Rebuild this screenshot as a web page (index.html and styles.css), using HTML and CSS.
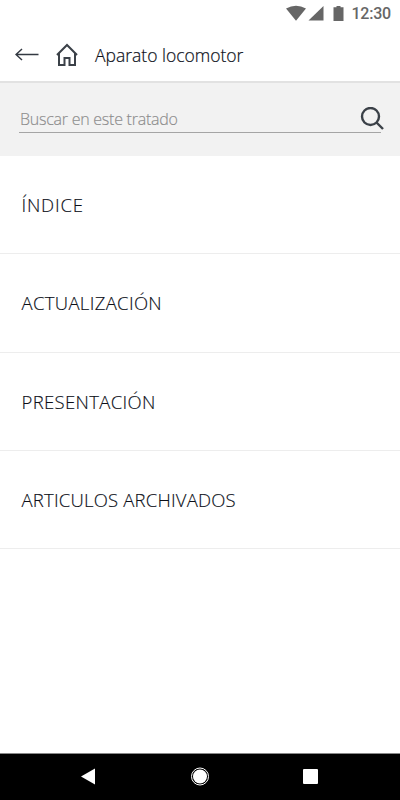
FILE: index.html
```html
<!DOCTYPE html>
<html lang="es">

<head>
    <meta charset="UTF-8">
    <meta name="viewport" content="width=device-width, initial-scale=1.0">
    <title>Aparato locomotor</title>
    <link rel="stylesheet" href="styles.css">
</head>

<body>
    <div class="status">
        <svg class="status-icons" width="60" height="18" viewBox="0 0 60 18">
            <path d="M1 4.500Q11 -1 21 4.500L11 16.800Z" />
            <path d="M23.500 16.500L38.500 2V16.500Z" />
            <path d="M48.500 3.200h3V2h4v1.200h3V17h-10Z" />
        </svg>
        <span class="clock">12:30</span>
    </div>
    <header class="topbar">
        <svg class="back" width="24" height="14" viewBox="0 0 24 14">
            <path d="M23.500 6.500H1M7 1L1 6.500l6 5.500" />
        </svg>
        <svg class="home" width="22" height="24" viewBox="0 0 22 24">
            <path d="M1 12L11 2l10 10M3 10.500V22h5.500v-7h5v7H19V10.500" />
        </svg>
        <h1 class="title">Aparato locomotor</h1>
    </header>
    <div class="search">
        <div class="field">
            <input class="input" type="text" placeholder="Buscar en este tratado">
        </div>
        <svg class="lens" width="24" height="24" viewBox="0 0 24 24">
            <circle cx="10.500" cy="9.500" r="8.500" />
            <path d="M16.500 15.500l6.500 6.500" />
        </svg>
    </div>
    <ul class="menu">
        <li class="item indice">ÍNDICE</li>
        <li class="item">ACTUALIZACIÓN</li>
        <li class="item">PRESENTACIÓN</li>
        <li class="item archivo">ARTICULOS ARCHIVADOS</li>
    </ul>
    <nav class="navbar">
        <svg width="400" height="46" viewBox="0 0 400 46">
            <path d="M81 22.500L95 14.500v16Z" />
            <circle cx="200" cy="22.500" r="8.500" class="ring" />
            <circle cx="200" cy="22.500" r="7" />
            <rect x="303" y="15" width="15" height="15" rx="1" />
        </svg>
    </nav>
</body>

</html>
```
FILE: styles.css
```css
* {
    box-sizing: border-box;
}

body {
    margin: 0;
    height: 800px;
    display: flex;
    flex-direction: column;
    background: #fff;
    color: #0c0f18;
    font-family: "Open Sans", "Noto Sans", sans-serif;
    overflow: hidden;
}

.status {
    height: 28px;
    display: flex;
    justify-content: flex-end;
    padding: 4px 9px 0 0;
    color: #666;
}

.status-icons {
    fill: #666;
    margin-right: 6px;
}

.clock {
    font-family: Roboto, sans-serif;
    font-size: 16px;
    font-weight: 500;
    line-height: 19px;
    letter-spacing: -0.2px;
}

.topbar {
    height: 55px;
    display: flex;
    align-items: center;
    padding-left: 15px;
    border-bottom: 2px solid #e2e2e2;
}

.back {
    fill: none;
    stroke: #333942;
    stroke-width: 1.5;
}

.home {
    fill: none;
    stroke: #3b4148;
    stroke-width: 2;
    margin-left: 17px;
}

.title {
    margin: 1px 0 0 17px;
    font-size: 17.5px;
    font-weight: 300;
    white-space: nowrap;
    -webkit-text-stroke: 0.2px;
}

.search {
    height: 73px;
    display: flex;
    padding: 24px 16px 0 19px;
    background: #f2f2f2;
}

.field {
    width: 362px;
    height: 26px;
    flex-shrink: 0;
    border-bottom: 1px solid #a5a5a5;
}

.input {
    width: 320px;
    height: 24px;
    padding: 0 0 0 1px;
    border: 0;
    outline: 0;
    background: none;
    font-family: inherit;
    font-size: 16px;
    font-weight: 300;
    letter-spacing: -0.25px;
    -webkit-text-stroke: 0.15px;
}

.input::placeholder {
    color: #8c8c8c;
}

.lens {
    flex-shrink: 0;
    margin-left: -21px;
    fill: none;
    stroke: #3b4148;
    stroke-width: 2.4;
}

.menu {
    flex: 1;
    margin: 0;
    padding: 0;
    list-style: none;
}

.item {
    height: 98.3px;
    display: flex;
    align-items: center;
    padding-left: 21.5px;
    border-bottom: 1px solid #ededed;
    font-size: 18.5px;
    font-weight: 300;
    letter-spacing: 0.33px;
    -webkit-text-stroke: 0.15px;
}

.indice {
    letter-spacing: 0.8px;
}

.archivo {
    letter-spacing: 0.2px;
}

.navbar {
    height: 47px;
    border-top: 1px solid #888;
    background: #000;
    fill: #fff;
}

.navbar svg {
    display: block;
}

.ring {
    fill: none;
    stroke: #fff;
}
```
